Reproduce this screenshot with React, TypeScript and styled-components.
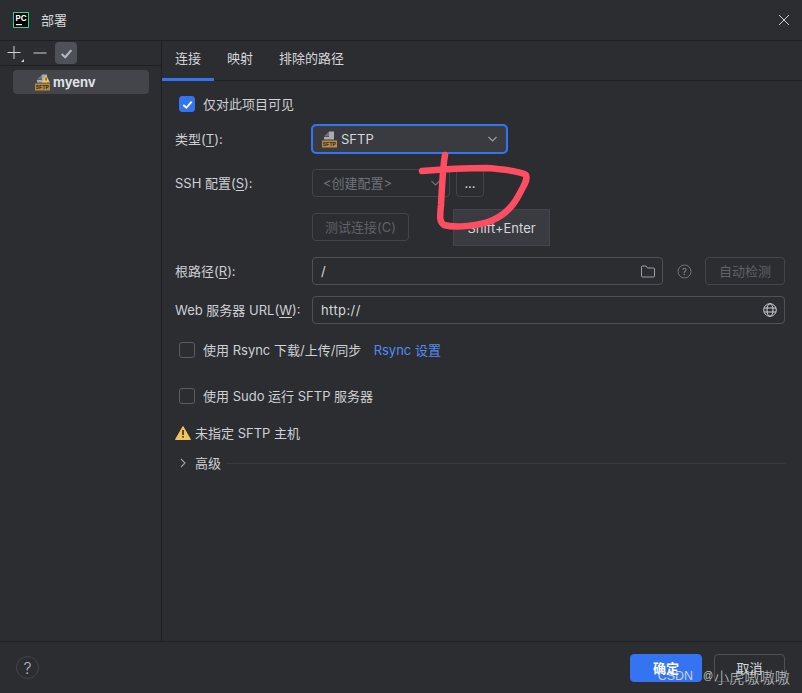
import { ReactNode } from "react";
import styled, { createGlobalStyle } from "styled-components";

const GlobalStyle = createGlobalStyle`
  html, body {
    margin: 0;
    padding: 0;
    background: #2b2d30;
  }
  * {
    box-sizing: border-box;
  }
`;

const Dialog = styled.div`
  position: relative;
  width: 802px;
  height: 693px;
  display: flex;
  flex-direction: column;
  overflow: hidden;
  background: #2b2d30;
  color: #ced0d6;
  font-family: Inter, "Noto Sans CJK SC", sans-serif;
  font-size: 13px;
  line-height: 16px;
`;

const TitleBar = styled.div`
  height: 41px;
  flex: none;
  display: flex;
  align-items: center;
  padding: 0 12px 0 13px;
  gap: 12px;
  border-bottom: 1px solid #1e1f22;
`;

const TitleText = styled.span`
  flex: 1;
  color: #d5d7dc;
`;

const Body = styled.div`
  flex: 1;
  display: flex;
  min-height: 0;
`;

const Sidebar = styled.div`
  width: 162px;
  flex: none;
  border-right: 1px solid #1e1f22;
`;

const SideToolbar = styled.div`
  height: 25px;
  display: flex;
  align-items: center;
  padding-left: 6px;
  gap: 9px;
  border-bottom: 1px solid #1e1f22;
`;

const ToolToggle = styled.div`
  width: 22px;
  height: 22px;
  margin-left: -1px;
  display: flex;
  align-items: center;
  justify-content: center;
  border-radius: 4px;
  background: #4e5157;
`;

const TreeItem = styled.div`
  height: 24px;
  margin: 4px 12px 0 13px;
  padding-left: 22px;
  display: flex;
  align-items: center;
  gap: 3px;
  border-radius: 4px;
  background: #43454a;
  font-weight: 700;
  color: #dfe1e5;
`;

const Main = styled.div`
  flex: 1;
  display: flex;
  flex-direction: column;
  min-width: 0;
`;

const Tabs = styled.div`
  height: 40px;
  flex: none;
  display: flex;
  border-bottom: 1px solid #1e1f22;
`;

const Tab = styled.div<{ $active?: boolean }>`
  height: 40px;
  padding: 0 13px 3px;
  display: flex;
  align-items: center;
  color: #d5d7dc;
  border-bottom: 3px solid ${(p) => (p.$active ? "#3574f0" : "transparent")};
`;

const Form = styled.div`
  flex: 1;
  display: flex;
  flex-direction: column;
  padding: 0 17px 0 13px;
`;

const Row = styled.div<{ $top: number }>`
  height: 28px;
  margin-top: ${(p) => p.$top}px;
  display: flex;
  align-items: center;
`;

const Label = styled.div`
  width: 137px;
  flex: none;
  white-space: nowrap;
  color: #ced0d6;
  u {
    text-underline-offset: 2px;
  }
`;

const Field = styled.div<{ $w?: number; $focus?: boolean; $dim?: boolean }>`
  height: 28px;
  ${(p) => (p.$w ? `width: ${p.$w}px; flex: none;` : "flex: 1;")}
  display: flex;
  align-items: center;
  padding: 0 7px 0 8px;
  gap: 4px;
  border-radius: 4px;
  border: 1px solid ${(p) => (p.$dim ? "#43454a" : "#4e5157")};
  background: ${(p) => (p.$focus ? "#393b40" : "transparent")};
  color: ${(p) => (p.$dim ? "#6f737a" : "#d5d7dc")};
  ${(p) => p.$focus && "outline: 2px solid #3574f0; outline-offset: -1px; padding: 0 9px;"}
  ${(p) => p.$dim && "padding: 0 9px 0 10px;"}
`;

const FieldText = styled.span`
  flex: 1;
`;

const UrlText = styled(FieldText)`
  letter-spacing: 0.4px;
`;

const DimButton = styled.div<{ $w: number; $strong?: boolean }>`
  width: ${(p) => p.$w}px;
  height: 28px;
  flex: none;
  display: flex;
  align-items: center;
  justify-content: center;
  border-radius: 4px;
  border: 1px solid #43454a;
  color: ${(p) => (p.$strong ? "#d5d7dc" : "#5f6268")};
`;

const BrowseButton = styled(DimButton)`
  margin-left: 6px;
`;

const HelpGlyph = styled.svg`
  flex: none;
  margin: 0 13px 0 14px;
`;

const TestSpacer = styled.div`
  width: 137px;
  flex: none;
`;

const CheckRow = styled.label<{ $top: number }>`
  height: 20px;
  margin-top: ${(p) => p.$top}px;
  display: flex;
  align-items: center;
  gap: 8px;
  padding-left: 4px;
`;

const Box = styled.span<{ $on?: boolean }>`
  width: 16px;
  height: 16px;
  flex: none;
  display: flex;
  align-items: center;
  justify-content: center;
  border-radius: 3px;
  background: ${(p) => (p.$on ? "#3574f0" : "transparent")};
  border: 1px solid ${(p) => (p.$on ? "#3574f0" : "#5a5d63")};
`;

const Link = styled.span`
  margin-left: 5px;
  color: #548af7;
`;

const Warning = styled.div`
  height: 20px;
  margin-top: 17px;
  display: flex;
  align-items: center;
  gap: 4px;
`;

const Advanced = styled.div`
  height: 20px;
  margin-top: 10px;
  display: flex;
  align-items: center;
  padding-left: 5px;
  gap: 9px;
`;

const Divider = styled.div`
  flex: 1;
  height: 1px;
  margin-left: -3px;
  background: #393b40;
`;

const Footer = styled.div`
  height: 52px;
  flex: none;
  display: flex;
  align-items: center;
  padding: 0 17px 0 16px;
  gap: 12px;
  border-top: 1px solid #1e1f22;
`;

const HelpButton = styled.div`
  width: 23px;
  height: 23px;
  margin-right: auto;
  display: flex;
  align-items: center;
  justify-content: center;
  border-radius: 50%;
  border: 1px solid #43454a;
  color: #b4b8bf;
  font-size: 16px;
  font-weight: 300;
`;

const FooterButton = styled.div<{ $primary?: boolean }>`
  width: ${(p) => (p.$primary ? 72 : 71)}px;
  height: 28px;
  display: flex;
  align-items: center;
  justify-content: center;
  border-radius: 4px;
  font-weight: ${(p) => (p.$primary ? 600 : 400)};
  color: ${(p) => (p.$primary ? "#ffffff" : "#d5d7dc")};
  background: ${(p) => (p.$primary ? "#3574f0" : "transparent")};
  border: 1px solid ${(p) => (p.$primary ? "#3574f0" : "#4e5157")};
`;

const Tooltip = styled.div`
  position: absolute;
  left: 453px;
  top: 209px;
  width: 97px;
  height: 37px;
  display: flex;
  align-items: center;
  justify-content: center;
  background: #393b40;
  border: 1px solid #43454a;
  color: #d5d7dc;
`;

const Scribble = styled.svg`
  position: absolute;
  left: 0;
  top: 0;
  pointer-events: none;
`;

const Watermark = styled.div`
  position: absolute;
  right: 12px;
  top: 667px;
  display: flex;
  align-items: center;
  font-family: "Noto Sans CJK SC", sans-serif;
  font-size: 15.2px;
  font-weight: 300;
  line-height: 18px;
  white-space: nowrap;
  color: rgba(225, 228, 232, 0.85);
`;

const WatermarkLatin = styled.span`
  font-family: "Liberation Sans", sans-serif;
  font-size: 12.4px;
`;

const WatermarkAt = styled.span`
  margin: 0 1px 0 10px;
  font-family: "Liberation Sans", sans-serif;
  font-size: 10px;
`;

function PcLogo() {
  return (
    <svg width="16" height="16" viewBox="0 0 16 16">
      <rect x="0.5" y="0.5" width="15" height="15" fill="#000" stroke="#21d789" />
      <text x="2.6" y="9" fill="#fff" fontSize="8" fontWeight="700" fontFamily="Inter, sans-serif">
        PC
      </text>
      <rect x="3" y="12" width="6" height="1.2" fill="#fff" />
    </svg>
  );
}

function SftpIcon({ warn }: { warn?: boolean }) {
  return (
    <svg width="15" height="17" viewBox="0 0 15 17" style={{ flex: "none" }}>
      <path d="M2 5.5 L7 0.5 V5.5 Z" fill="#6f737a" />
      <path d="M7 0.5 H12 V8.5 H2 V6 H7 Z" fill="#a8abb2" />
      {warn && <path d="M11 1 L15 8.5 H7 Z" fill="#f2c55c" />}
      {warn && <rect x="10.5" y="3.5" width="1" height="3" fill="#2b2d30" />}
      <rect x="0" y="9.5" width="15" height="7" fill="#b98a3a" />
      <text x="0.7" y="15" fontSize="5.2" fontWeight="700" fill="#2b2d30" fontFamily="Inter, sans-serif">
        SFTP
      </text>
    </svg>
  );
}

function Chevron({ color = "#9da0a8" }: { color?: string }) {
  return (
    <svg width="9" height="6" viewBox="0 0 9 6" fill="none" style={{ flex: "none" }}>
      <path d="M0.5 1 L4.5 5 L8.5 1" stroke={color} strokeWidth="1.1" />
    </svg>
  );
}

function CheckMark({ color, size }: { color: string; size: number }) {
  return (
    <svg width={size} height={size} viewBox="0 0 14 14" fill="none">
      <path d="M2.5 7.5 L5.8 10.5 L11.5 3.8" stroke={color} strokeWidth="2" />
    </svg>
  );
}

function CheckItem({ top, on, children }: { top: number; on?: boolean; children: ReactNode }) {
  return (
    <CheckRow $top={top}>
      <Box $on={on}>{on && <CheckMark color="#fff" size={13} />}</Box>
      <span>{children}</span>
    </CheckRow>
  );
}

export default function App() {
  return (
    <Dialog>
      <GlobalStyle />
      <TitleBar>
        <PcLogo />
        <TitleText>部署</TitleText>
        <svg width="12" height="12" viewBox="0 0 12 12" fill="none">
          <path d="M1 1 L11 11 M11 1 L1 11" stroke="#ced0d6" strokeWidth="1" />
        </svg>
      </TitleBar>
      <Body>
        <Sidebar>
          <SideToolbar>
            <svg width="18" height="18" viewBox="0 0 18 18" fill="none">
              <path d="M8 2 V15 M1.5 8.5 H14.5" stroke="#ced0d6" strokeWidth="1" />
              <path d="M18 15 V18 H15 Z" fill="#ced0d6" />
            </svg>
            <svg width="14" height="14" viewBox="0 0 14 14" fill="none">
              <path d="M0.5 7 H13.5" stroke="#ced0d6" strokeWidth="1" />
            </svg>
            <ToolToggle>
              <CheckMark color="#b4b8bf" size={15} />
            </ToolToggle>
          </SideToolbar>
          <TreeItem>
            <SftpIcon warn />
            myenv
          </TreeItem>
        </Sidebar>
        <Main>
          <Tabs>
            <Tab $active>连接</Tab>
            <Tab>映射</Tab>
            <Tab>排除的路径</Tab>
          </Tabs>
          <Form>
            <CheckItem top={13} on>
              仅对此项目可见
            </CheckItem>
            <Row $top={11}>
              <Label>
                类型(<u>T</u>):
              </Label>
              <Field $w={195} $focus>
                <SftpIcon />
                <FieldText>SFTP</FieldText>
                <Chevron />
              </Field>
            </Row>
            <Row $top={16}>
              <Label>
                SSH 配置(<u>S</u>):
              </Label>
              <Field $w={138} $dim>
                <FieldText>&lt;创建配置&gt;</FieldText>
                <Chevron color="#6f737a" />
              </Field>
              <BrowseButton $w={28} $strong>
                ...
              </BrowseButton>
            </Row>
            <Row $top={16}>
              <TestSpacer />
              <DimButton $w={97}>测试连接(C)</DimButton>
            </Row>
            <Row $top={16}>
              <Label>
                根路径(<u>R</u>):
              </Label>
              <Field>
                <FieldText>/</FieldText>
                <svg width="14" height="13" viewBox="0 0 14 13" fill="none">
                  <path d="M0.5 2 a1 1 0 0 1 1-1 H5 L6.5 3 H12.5 a1 1 0 0 1 1 1 V11 a1 1 0 0 1-1 1 H1.5 a1 1 0 0 1-1-1 Z" stroke="#9da0a8" />
                </svg>
              </Field>
              <HelpGlyph width="15" height="15" viewBox="0 0 15 15" fill="none">
                <circle cx="7.5" cy="7.5" r="6.5" stroke="#6f737a" />
                <text x="7.5" y="11" textAnchor="middle" fontSize="9.5" fill="#8a8e95" fontFamily="Inter, sans-serif">
                  ?
                </text>
              </HelpGlyph>
              <DimButton $w={80}>自动检测</DimButton>
            </Row>
            <Row $top={11}>
              <Label>
                Web 服务器 URL(<u>W</u>):
              </Label>
              <Field>
                <UrlText>http://</UrlText>
                <svg width="14" height="14" viewBox="0 0 14 14" fill="none" stroke="#ced0d6">
                  <circle cx="7" cy="7" r="6.3" />
                  <ellipse cx="7" cy="7" rx="3" ry="6.3" />
                  <path d="M1 5 H13 M1 9 H13" />
                </svg>
              </Field>
            </Row>
            <CheckItem top={16}>
              使用 Rsync 下载/上传/同步 <Link>&nbsp;Rsync 设置</Link>
            </CheckItem>
            <CheckItem top={26}>使用 Sudo 运行 SFTP 服务器</CheckItem>
            <Warning>
              <svg width="16" height="14" viewBox="0 0 16 14">
                <path d="M8 0.5 L15.5 13.5 H0.5 Z" fill="#f2c55c" stroke="#f2c55c" strokeLinejoin="round" />
                <rect x="7.2" y="4" width="1.6" height="5" fill="#2b2d30" />
                <rect x="7.2" y="10" width="1.6" height="1.6" fill="#2b2d30" />
              </svg>
              未指定 SFTP 主机
            </Warning>
            <Advanced>
              <svg width="6" height="10" viewBox="0 0 6 10" fill="none">
                <path d="M1 1 L5 5 L1 9" stroke="#9da0a8" strokeWidth="1.1" />
              </svg>
              高级
              <Divider />
            </Advanced>
          </Form>
        </Main>
      </Body>
      <Footer>
        <HelpButton>?</HelpButton>
        <FooterButton $primary>确定</FooterButton>
        <FooterButton>取消</FooterButton>
      </Footer>
      <Tooltip>Shift+Enter</Tooltip>
      <Scribble width="802" height="693" viewBox="0 0 802 693" fill="none">
        <path
          d="M445 155 C443 165 442 185 441 205 C440 216 439 222 444 225 C455 228 480 226 493 220 C505 215 514 205 520 193 C524 185 528 180 526 175 C520 171 500 169 487 168 C470 168 445 169 422 171"
          stroke="#ff4d61"
          strokeWidth="6.5"
          strokeLinecap="round"
          strokeLinejoin="round"
        />
      </Scribble>
      <Watermark>
        <WatermarkLatin>CSDN</WatermarkLatin>
        <WatermarkAt>@</WatermarkAt>
        小虎嗷嗷嗷
      </Watermark>
    </Dialog>
  );
}
